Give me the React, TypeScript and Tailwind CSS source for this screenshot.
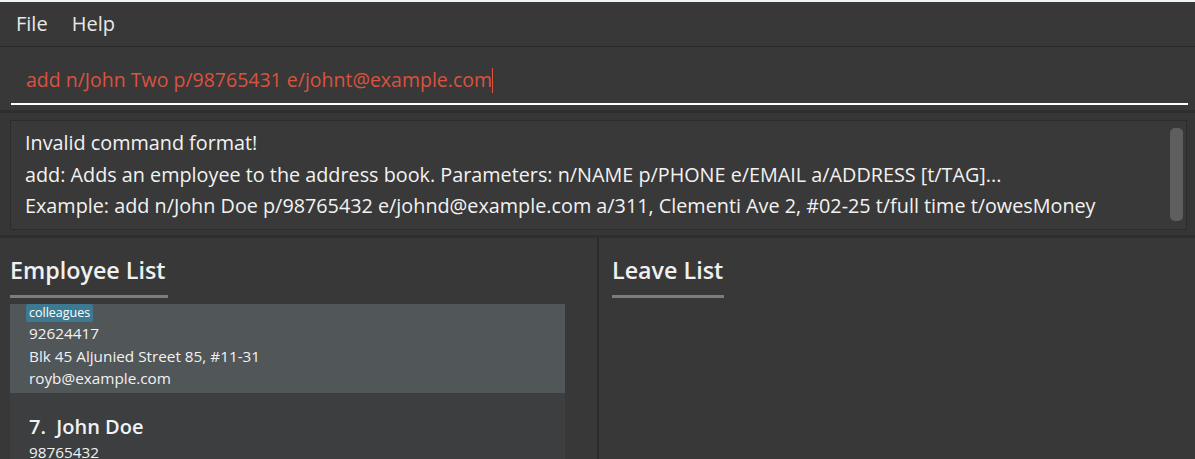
import React from "react";

const font = { fontFamily: '"Segoe UI", "Open Sans", "Noto Sans", sans-serif' };

const resultLines = [
  "Invalid command format!",
  "add: Adds an employee to the address book. Parameters: n/NAME p/PHONE e/EMAIL a/ADDRESS [t/TAG]...",
  "Example: add n/John Doe p/98765432 e/johnd@example.com a/311, Clementi Ave 2, #02-25 t/full time t/owesMoney",
];

const PanelHeader: React.FC<{ title: string; lineWidth: string }> = ({ title, lineWidth }) => (
  <div className="pt-[14px]">
    <div className="text-[23.3px] leading-[36px] font-semibold text-[#f0f0f0]">{title}</div>
    <div className={`mt-[7px] h-[3px] bg-[#7c7c7c] ${lineWidth}`} />
  </div>
);

export default function App() {
  return (
    <div
      className="w-[1195px] h-[459px] overflow-hidden bg-[#383838] flex flex-col text-white"
      style={font}
    >
      <div className="h-[2px] bg-[#eef5f7]" />

      {/* menu bar */}
      <div className="h-[45px] flex items-center gap-[24px] pl-[16px] text-[20px] text-[#e8e8e8] border-b border-[#2b2b2b]">
        <span>File</span>
        <span>Help</span>
      </div>

      {/* command box */}
      <div className="h-[66px] px-[11px] pt-[16px] pr-[7px] border-b-[3px] border-[#2e2e2e]">
        <div className="h-[42px] border-b-2 border-white pl-[15px] pt-[2px] flex items-start">
          <span className="text-[19.5px] leading-[30px] text-[#d9533f] whitespace-nowrap">
            add n/John Two p/98765431 e/johnt@example.com
          </span>
          <span className="mt-[3px] w-[1px] h-[25px] bg-[#d9533f]" />
        </div>
      </div>

      {/* result display */}
      <div className="h-[125px] px-[10px] pt-[7px] pr-[8px] border-b-[3px] border-[#2e2e2e] bg-[#363636]">
        <div className="h-[110px] bg-[#393939] border border-[#2c2c2c] flex">
          <div className="flex-1 pl-[14px] pt-[6px] text-[19.8px] leading-[31.5px] text-[#f2f2f2]">
            {resultLines.map((l) => (
              <div key={l} className="whitespace-nowrap">{l}</div>
            ))}
          </div>
          <div className="w-[13px] mr-[3px] mt-[7px] mb-[8px] rounded-[5px] bg-[#5e5e5e]" />
        </div>
      </div>

      {/* lists */}
      <div className="flex-1 flex min-h-0">
        <div className="w-[597px] pl-[10px] flex flex-col">
          <PanelHeader title="Employee List" lineWidth="w-[158px]" />
          <div className="mt-[6px] w-[555px] flex-1 overflow-hidden">
            <div className="h-[89px] bg-[#515659] pl-[19px] text-[15.3px] leading-[22.5px] text-[#f2f2f2]">
              <div className="h-[18px] flex items-start">
                <span className="ml-[-3px] px-[3px] h-[18px] leading-[17px] text-[12.5px] bg-[#3d7a91] rounded-[2px] text-white">
                  colleagues
                </span>
              </div>
              <div>92624417</div>
              <div className="whitespace-nowrap">Blk 45 Aljunied Street 85, #11-31</div>
              <div>royb@example.com</div>
            </div>
            <div className="h-[80px] bg-[#3c3e40] pl-[19px] pt-[20px]">
              <div className="text-[20px] leading-[28px] font-semibold text-[#f2f2f2]">7.&nbsp; John Doe</div>
              <div className="text-[15.3px] leading-[22px] text-[#f2f2f2]">98765432</div>
            </div>
          </div>
        </div>
        <div className="w-[2px] bg-[#2b2b2b]" />
        <div className="flex-1 pl-[13px]">
          <PanelHeader title="Leave List" lineWidth="w-[112px]" />
        </div>
      </div>
    </div>
  );
}
